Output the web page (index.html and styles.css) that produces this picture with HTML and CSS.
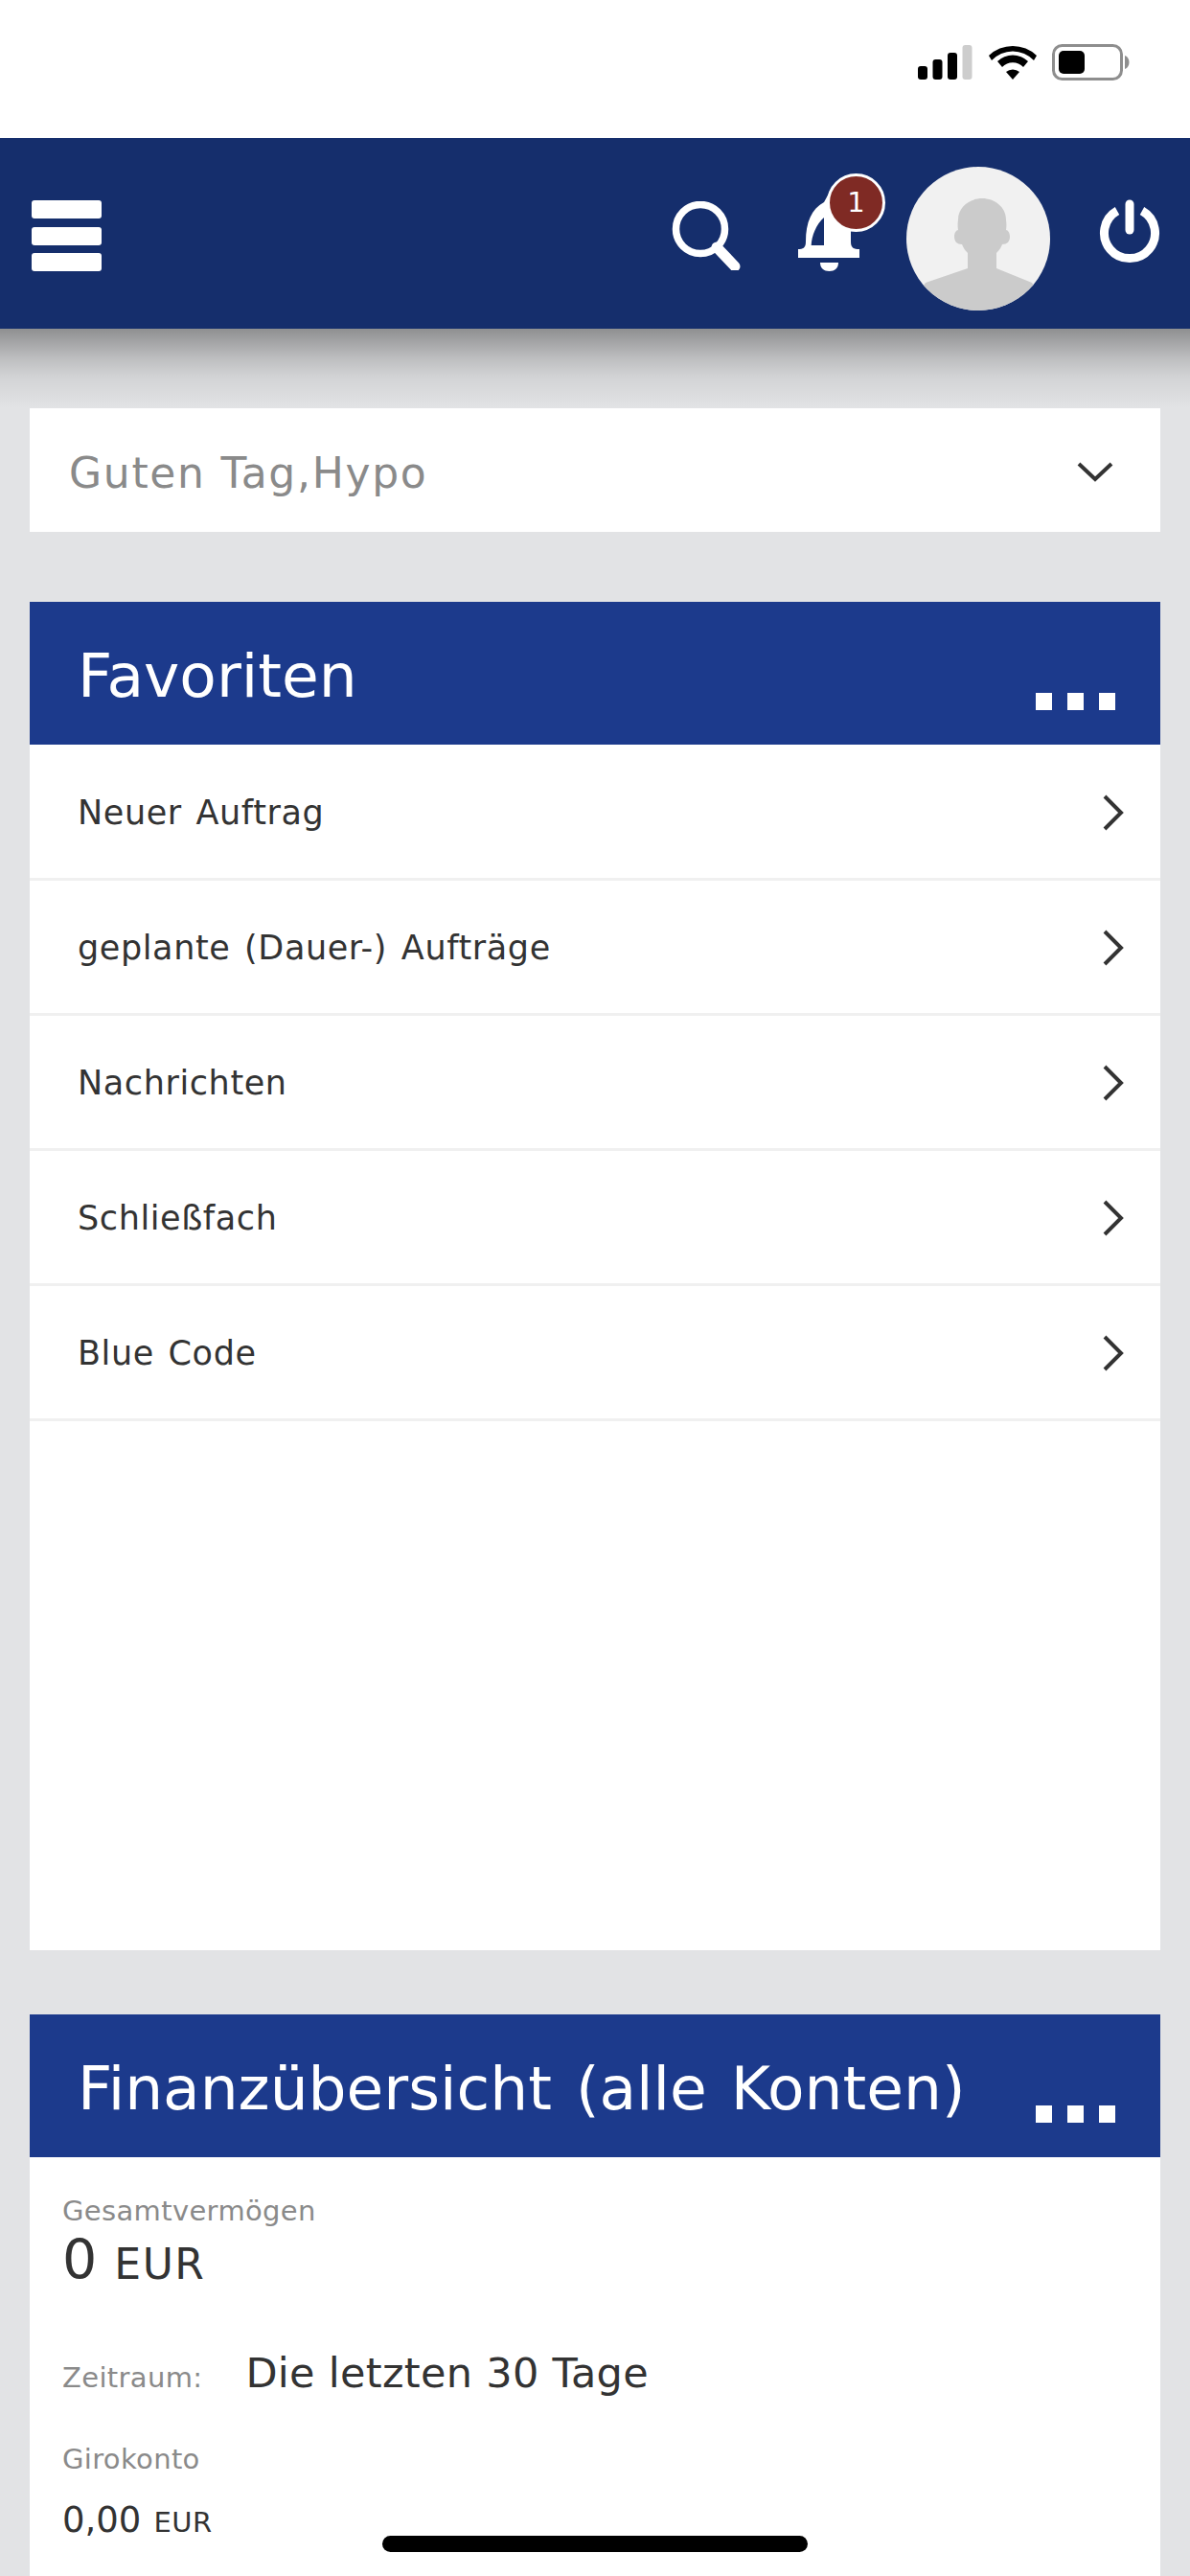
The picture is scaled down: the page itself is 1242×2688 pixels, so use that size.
FILE: index.html
```html
<!DOCTYPE html>
<html lang="de">
<head>
<meta charset="utf-8">
<title>Hypo Banking</title>
<link rel="stylesheet" href="styles.css">
</head>
<body>
<div class="screen">
  <div class="status-bar">
    <svg class="status-icons" width="222" height="38" viewBox="0 0 222 38">
      <rect x="0" y="23" width="10" height="14" rx="3" fill="#000"/>
      <rect x="15.500" y="16" width="10" height="21" rx="3" fill="#000"/>
      <rect x="31" y="9" width="10" height="28" rx="3" fill="#000"/>
      <rect x="46.500" y="1" width="10" height="36" rx="3" fill="#cdcdcd"/>
      <path d="M74 13 A36 36 0 0 1 124 13 L121 18 A30 30 0 0 0 77 18 Z" fill="#000" transform="translate(0 -1)"/>
      <path d="M83 22 A23 23 0 0 1 115 22 L110 28 A15 15 0 0 0 88 28 Z" fill="#000" transform="translate(0 -4)"/>
      <path d="M92 29 A11 11 0 0 1 106 29 L99 37 Z" fill="#000"/>
      <rect x="141.500" y="1.500" width="71" height="35" rx="9" fill="#fff" stroke="#8e8e8e" stroke-width="3"/>
      <rect x="147" y="7" width="27" height="24" rx="5" fill="#000"/>
      <path d="M216 12 C219 13 220.500 16 220.500 19 C220.500 22 219 25 216 26 Z" fill="#8e8e8e"/>
    </svg>
  </div>

  <header class="app-header">
    <button class="menu-button" type="button" aria-label="Menü"><span></span><span></span><span></span></button>
    <div class="header-spacer"></div>
    <svg class="icon-search" width="72" height="72" viewBox="0 0 72 72">
      <circle cx="30" cy="29" r="25.500" fill="none" stroke="#fff" stroke-width="7.500"/>
      <path d="M47 48 L66 68" stroke="#fff" stroke-width="11" stroke-linecap="round" fill="none"/>
    </svg>
    <div class="bell">
      <svg width="66" height="105" viewBox="0 0 66 105">
        <path d="M0 80 C6 80 8 78 8 72 C8 52 14 38 27 31 L33 20 L55 40 L55 72 C55 78 57 80 64 80 L64 89 L0 89 Z" fill="#fff"/>
        <path d="M27 47 C19 54 14 66 13.700 76 L27 76 Z" fill="#152e6c"/>
        <path d="M23 94 L42 94 C42 100 38 103 32.500 103 C27 103 23 100 23 94 Z" fill="#fff"/>
      </svg>
      <span class="badge">1</span>
    </div>
    <svg class="avatar" width="150" height="150" viewBox="0 0 150 150">
      <defs><clipPath id="avatar-clip"><circle cx="75" cy="75" r="75"/></clipPath></defs>
      <circle cx="75" cy="75" r="75" fill="#f1f1f1"/>
      <g clip-path="url(#avatar-clip)" fill="#cbcbcb">
        <path d="M20 121 L64 106 L64 90 C60 86 59 83 58 81 C53 81 50 78 50 73 C50 69 52 66 54 66 C53 60 54 57 54 55 C54 42 66 33 79 33 C92 33 104 42 104 55 C104 57 105 60 104 66 C106 66 108 69 108 73 C108 78 105 81 100 81 C99 84 97 87 94 90 L94 106 L131 121 L150 150 L0 150 Z"/>
      </g>
    </svg>
    <svg class="icon-power" width="64" height="70" viewBox="0 0 64 70">
      <path d="M19 12 A26.500 26.500 0 1 0 45 12" fill="none" stroke="#fff" stroke-width="9"/>
      <path d="M32 5 L32 32" stroke="#fff" stroke-width="9" stroke-linecap="round" fill="none"/>
    </svg>
  </header>

  <main class="content">
    <section class="greeting">
      <span class="greeting-text">Guten Tag,Hypo</span>
      <svg class="chevron-down" width="38" height="22" viewBox="0 0 38 22">
        <path d="M2 3 L19 19 L36 3" fill="none" stroke="#333" stroke-width="4"/>
      </svg>
    </section>

    <section class="panel panel-favorites">
      <div class="panel-head">
        <h2 class="panel-title">Favoriten</h2>
        <div class="more"><i></i><i></i><i></i></div>
      </div>
      <ul class="link-list">
        <li class="link-row"><span>Neuer Auftrag</span><svg class="chevron" width="22" height="38" viewBox="0 0 22 38"><path d="M2 2 L19 19 L2 36" fill="none" stroke="#333" stroke-width="4"/></svg></li>
        <li class="link-row"><span>geplante (Dauer-) Aufträge</span><svg class="chevron" width="22" height="38" viewBox="0 0 22 38"><path d="M2 2 L19 19 L2 36" fill="none" stroke="#333" stroke-width="4"/></svg></li>
        <li class="link-row"><span>Nachrichten</span><svg class="chevron" width="22" height="38" viewBox="0 0 22 38"><path d="M2 2 L19 19 L2 36" fill="none" stroke="#333" stroke-width="4"/></svg></li>
        <li class="link-row"><span>Schließfach</span><svg class="chevron" width="22" height="38" viewBox="0 0 22 38"><path d="M2 2 L19 19 L2 36" fill="none" stroke="#333" stroke-width="4"/></svg></li>
        <li class="link-row"><span>Blue Code</span><svg class="chevron" width="22" height="38" viewBox="0 0 22 38"><path d="M2 2 L19 19 L2 36" fill="none" stroke="#333" stroke-width="4"/></svg></li>
      </ul>
    </section>

    <section class="panel panel-finance">
      <div class="panel-head">
        <h2 class="panel-title">Finanzübersicht (alle Konten)</h2>
        <div class="more"><i></i><i></i><i></i></div>
      </div>
      <div class="finance-body">
        <div class="label">Gesamtvermögen</div>
        <div class="total"><span class="total-value">0</span> <span class="total-unit">EUR</span></div>
        <div class="period"><span class="label">Zeitraum:</span><span class="period-value">Die letzten 30 Tage</span></div>
        <div class="label account-name">Girokonto</div>
        <div class="account-amount"><span class="amount-value">0,00</span> <span class="amount-unit">EUR</span></div>
      </div>
    </section>
  </main>

  <div class="home-indicator"></div>
</div>
</body>
</html>
```
FILE: styles.css
```css
* { box-sizing: border-box; }

html, body {
  margin: 0;
  padding: 0;
  height: 2688px;
  overflow: hidden;
}

body {
  font-family: "DejaVu Sans", Verdana, sans-serif;
  background: #e2e3e5;
  color: #333;
}

.screen {
  position: relative;
  width: 1242px;
  height: 2688px;
  overflow: hidden;
}

/* Status bar */
.status-bar {
  position: relative;
  z-index: 2;
  height: 144px;
  background: #fff;
  display: flex;
  justify-content: flex-end;
  padding: 46px 62px 0 0;
}

.status-icons { display: block; }

/* App header */
.app-header {
  position: relative;
  z-index: 1;
  height: 199px;
  background: #152e6c;
  display: flex;
  align-items: flex-start;
  padding: 0 31px 0 33px;
}

/* Soft shadow falling onto the page below the header */
.app-header::after {
  content: "";
  position: absolute;
  left: 0;
  right: 0;
  top: 100%;
  height: 83px;
  background: linear-gradient(to bottom,
    rgba(0, 0, 0, 0.37) 0,
    rgba(0, 0, 0, 0.17) 30px,
    rgba(0, 0, 0, 0.07) 50px,
    rgba(0, 0, 0, 0) 83px);
  pointer-events: none;
}

.menu-button {
  width: 73px;
  margin-top: 65px;
  padding: 0;
  border: 0;
  background: none;
  display: flex;
  flex-direction: column;
  gap: 8.500px;
}

.menu-button span {
  display: block;
  height: 19px;
  background: #fff;
  border-radius: 3px;
}

.header-spacer { flex: 1; }

.icon-search { margin-top: 66px; display: block; }

.bell {
  position: relative;
  width: 66px;
  height: 105px;
  margin: 36px 0 0 60px;
}

.bell svg { display: block; }

.badge {
  position: absolute;
  left: 30px;
  top: 1px;
  width: 61px;
  height: 61px;
  border: 3px solid #fff;
  border-radius: 50%;
  background: #7f2a24;
  color: #fff;
  font-size: 29px;
  line-height: 55px;
  text-align: center;
}

.avatar { margin: 30px 0 0 47px; display: block; }

.icon-power { margin: 64px 0 0 51px; display: block; }

/* Page content */
.content { padding: 83px 31px 0; }

.greeting {
  height: 129px;
  background: #fff;
  display: flex;
  align-items: center;
  justify-content: space-between;
  padding: 0 49px 0 41px;
}

.greeting-text {
  font-size: 44px;
  letter-spacing: 1.700px;
  padding-top: 6px;
  color: #8a8a8a;
}

.chevron-down { display: block; margin-top: 2px; }

.panel {
  background: #fff;
}

.panel-favorites {
  height: 1407px;
  margin-top: 73px;
}

.panel-finance {
  margin-top: 67px;
  height: 600px;
}

.panel-head {
  position: relative;
  height: 149px;
  background: #1c3a8c;
  padding-left: 50px;
}

.panel-title {
  margin: 0;
  font-size: 63px;
  font-weight: 400;
  line-height: 155px;
  word-spacing: 5px;
  color: #fff;
  white-space: nowrap;
}

/* Three square dots at the right of a panel heading */
.more {
  position: absolute;
  right: 47px;
  top: 95px;
  display: flex;
  gap: 16px;
}

.more i {
  display: block;
  width: 17px;
  height: 18px;
  background: #fff;
}

.link-list {
  list-style: none;
  margin: 0;
  padding: 1px 0 0;
}

.link-row {
  height: 141px;
  display: flex;
  align-items: center;
  justify-content: space-between;
  padding: 1px 38px 0 50px;
  border-bottom: 3px solid #f0f0f0;
  font-size: 35px;
  letter-spacing: 0.600px;
  word-spacing: 3px;
  color: #333;
}

.chevron { display: block; }

/* Finance overview */
.finance-body { padding: 36px 34px 0; }

.label {
  font-size: 29px;
  line-height: 40px;
  letter-spacing: 0.350px;
  color: #8a8a8a;
}

.total {
  line-height: 62px;
  color: #333;
}

.total-value { font-size: 57px; }
.total-unit { font-size: 44px; letter-spacing: 1.500px; margin-left: 13px; }

.period {
  display: flex;
  align-items: baseline;
  margin-top: 42px;
}

.period-value {
  font-size: 43px;
  line-height: 60px;
  letter-spacing: 0.300px;
  margin-left: 45px;
  color: #333;
}

.account-name { margin-top: 40px; }

.account-amount {
  margin-top: 19px;
  line-height: 50px;
}

.amount-value { font-size: 37px; }
.amount-unit { font-size: 29px; letter-spacing: 0.500px; margin-left: 8px; }

/* iOS home indicator */
.home-indicator {
  position: absolute;
  left: 399px;
  top: 2646px;
  width: 444px;
  height: 17px;
  border-radius: 9px;
  background: #000;
}
```
